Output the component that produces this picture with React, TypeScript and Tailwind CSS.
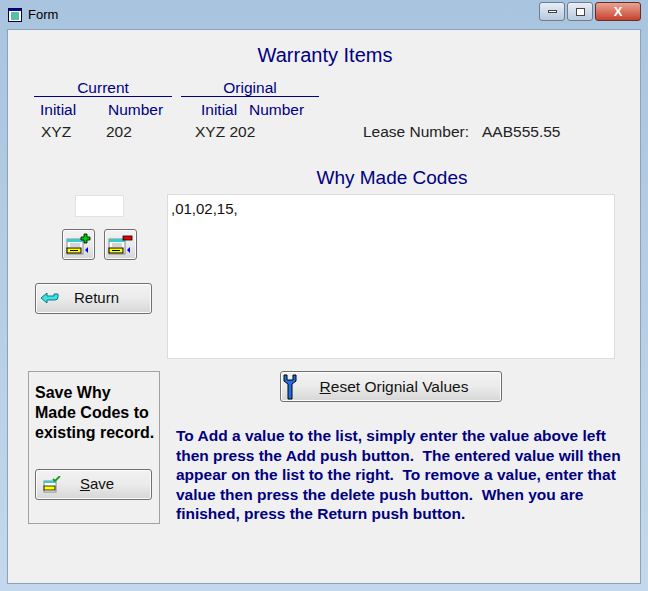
const font = { fontFamily: '"Liberation Sans", Arial, sans-serif' };

function Btn({ children, className = "" }: { children: React.ReactNode; className?: string }) {
  return (
    <div
      className={`flex items-center rounded-[3px] border border-[#707070] bg-gradient-to-b from-[#f2f2f2] via-[#ebebeb] to-[#d6d6d6] shadow-[inset_0_0_0_1px_#fcfcfc] ${className}`}
    >
      {children}
    </div>
  );
}

function GridIcon({ sign }: { sign: "plus" | "minus" }) {
  return (
    <svg width="26" height="24" viewBox="0 0 26 24">
      <rect x="1" y="6" width="16" height="15" fill="#fff" stroke="#888" />
      <rect x="1" y="6" width="16" height="3" fill="#3cc" />
      <path d="M4 11h10M4 13h10" stroke="#aaa" />
      <rect x="1" y="15" width="14" height="5" fill="#ff0" stroke="#000" />
      <path d="M4 17.5h8" stroke="#000" />
      <path d="M22 14l-3 3 3 3z" fill="#00f" />
      {sign === "plus" ? (
        <path d="M18 1h3v3h3v3h-3v3h-3v-3h-3v-3h3z" fill="#0c0" stroke="#000" strokeWidth="0.8" />
      ) : (
        <rect x="15" y="3" width="9" height="4" fill="#e00" stroke="#000" strokeWidth="0.8" />
      )}
    </svg>
  );
}

export default function App() {
  return (
    <div style={font} className="w-[648px] h-[591px] bg-gradient-to-b from-[#a9c4de] to-[#c3d8ec] px-[7px] pb-[7px] flex flex-col">
      <div className="h-[29px] flex items-center pl-[1px]">
        <svg width="14" height="14" viewBox="0 0 14 14" className="mr-[6px]">
          <rect x="0.5" y="0.5" width="13" height="13" fill="#fff" stroke="#003" />
          <rect x="1" y="1" width="12" height="2" fill="#00a" />
          <path d="M3 5h8M3 7h8M3 9h8M3 11h8" stroke="#2a8" strokeWidth="1.3" />
        </svg>
        <span className="text-[13px] text-black">Form</span>
        <div className="ml-auto flex gap-[2px] mt-[-6px]">
          <div className="w-[26px] h-[19px] rounded-[3px] border border-[#6d7d92] bg-gradient-to-b from-[#e8eef6] to-[#b9c9dc] flex items-center justify-center">
            <div className="w-[9px] h-[3px] bg-white border border-[#444]" />
          </div>
          <div className="w-[26px] h-[19px] rounded-[3px] border border-[#6d7d92] bg-gradient-to-b from-[#e8eef6] to-[#b9c9dc] flex items-center justify-center">
            <div className="w-[9px] h-[8px] bg-white border border-[#444]" />
          </div>
          <div className="w-[46px] h-[19px] rounded-[3px] border border-[#6b2a22] bg-gradient-to-b from-[#e8a293] to-[#c4402c] flex items-center justify-center text-white font-bold text-[13px]">
            X
          </div>
        </div>
      </div>
      <div className="flex-1 bg-[#f0f0f0] border border-[#8aa2bd] relative">
        <div className="text-center text-[20px] text-[#000080] mt-[13px] pl-[2px] leading-[24px]">Warranty Items</div>
        <div className="flex mt-[12px] text-[15.5px]">
          <div className="ml-[26px] w-[138px] border-b border-[#000080] text-center text-[#000080] leading-[17px]">Current</div>
          <div className="ml-[9px] w-[138px] border-b border-[#000080] text-center text-[#000080] leading-[17px]">Original</div>
        </div>
        <div className="flex text-[15.5px] text-[#000080] mt-[4px] leading-[17px]">
          <span className="ml-[32px] w-[68px]">Initial</span>
          <span className="w-[93px]">Number</span>
          <span className="w-[48px]">Initial</span>
          <span>Number</span>
        </div>
        <div className="flex text-[15.5px] text-[#222] mt-[5px] leading-[17px]">
          <span className="ml-[33px] w-[65px]">XYZ</span>
          <span className="w-[89px]">202</span>
          <span className="w-[168px]">XYZ 202</span>
          <span className="w-[119px]">Lease Number:</span>
          <span>AAB555.55</span>
        </div>
        <div className="flex mt-[28px]">
          <div className="w-[159px] flex flex-col items-center">
            <div className="mt-[27px] w-[49px] h-[22px] bg-white border border-[#e3e3e3] ml-[24px]" />
            <div className="flex gap-[9px] mt-[12px] ml-[24px]">
              <Btn className="w-[33px] h-[31px] justify-center"><GridIcon sign="plus" /></Btn>
              <Btn className="w-[33px] h-[31px] justify-center"><GridIcon sign="minus" /></Btn>
            </div>
            <Btn className="mt-[23px] ml-[27px] self-start w-[117px] h-[31px] pl-[4px]">
              <svg width="20" height="14" viewBox="0 0 20 14">
                <path d="M7 1L1 6l6 5V8h8a3 3 0 0 0 3-3V2h-4v2H7z" fill="#3ee0e8" stroke="#0a7a80" strokeWidth="1" />
              </svg>
              <span className="flex-1 text-center text-[15px] text-[#111] pr-[18px]">Return</span>
            </Btn>
          </div>
          <div className="flex flex-col">
            <div className="text-center text-[19px] text-[#000080] leading-[20px] ml-[2px]">Why Made Codes</div>
            <div className="mt-[6px] w-[448px] h-[165px] bg-white border border-[#dcdcdc] text-[15px] text-[#111] pl-[3px] pt-[3px]">,01,02,15,</div>
          </div>
        </div>
        <div className="flex mt-[12px]">
          <div className="ml-[20px] w-[132px] h-[153px] border border-[#a0a0a0] flex flex-col">
            <div className="mt-[11px] ml-[6px] text-[16px] font-bold text-black leading-[20px]">
              Save Why<br />Made Codes to<br />existing record.
            </div>
            <Btn className="mt-[26px] ml-[6px] w-[117px] h-[31px] pl-[7px]">
              <svg width="18" height="17" viewBox="0 0 18 17">
                <rect x="1" y="5" width="12" height="11" fill="#fff" stroke="#888" />
                <rect x="1" y="5" width="12" height="2" fill="#3cc" />
                <rect x="1" y="10" width="11" height="4" fill="#ff0" stroke="#000" strokeWidth="0.8" />
                <path d="M10 3l2 2 5-5" fill="none" stroke="#1a9a1a" strokeWidth="1.8" />
              </svg>
              <span className="flex-1 text-center text-[15px] text-[#111] pr-[18px]"><u>S</u>ave</span>
            </Btn>
          </div>
          <div className="ml-[16px] flex flex-col">
            <Btn className="ml-[104px] w-[222px] h-[31px] pl-[2px]">
              <svg width="14" height="26" viewBox="0 0 14 26">
                <path d="M1 1v6l4 3v15h4V10l4-3V1h-3v5H4V1z" fill="#1e6ee6" stroke="#000" strokeWidth="1" />
              </svg>
              <span className="flex-1 text-center text-[15.5px] text-[#111] pr-[10px]"><u>R</u>eset Orignial Values</span>
            </Btn>
            <div className="mt-[24px] text-[15.5px] font-bold text-[#000080] leading-[19.5px] w-[445px]">
              To Add a value to the list, simply enter the value above left then press the Add push button.&nbsp; The entered value will then appear on the list to the right.&nbsp; To remove a value, enter that value then press the delete push button.&nbsp; When you are finished, press the Return push button.
            </div>
          </div>
        </div>
      </div>
    </div>
  );
}
